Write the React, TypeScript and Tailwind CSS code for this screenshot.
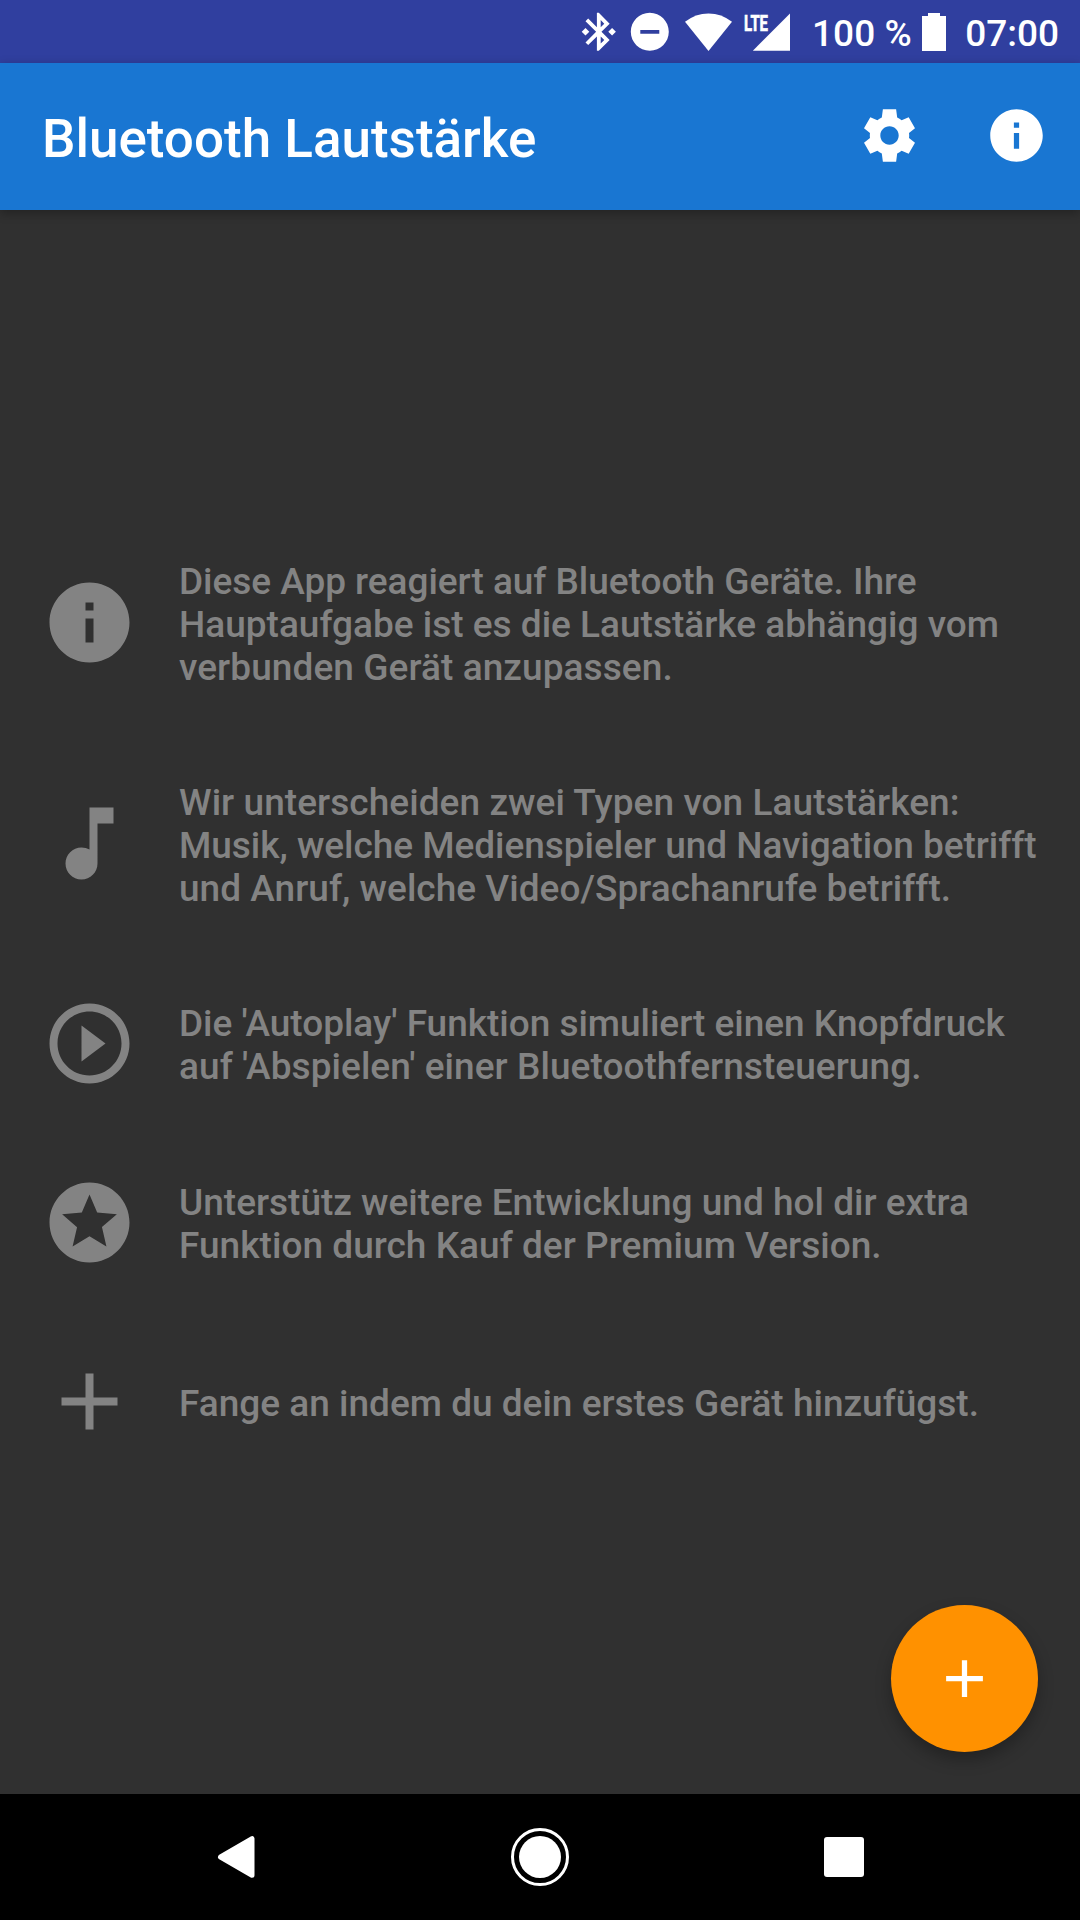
import React from 'react';

type IconProps = { d: string; className?: string };

function Icon({ d, className = '' }: IconProps) {
  return (
    <svg viewBox="0 0 24 24" className={`shrink-0 ${className}`} fill="currentColor" aria-hidden="true">
      <path d={d} />
    </svg>
  );
}

const INFO = 'M12 2C6.48 2 2 6.48 2 12s4.48 10 10 10 10-4.48 10-10S17.52 2 12 2zm1 15h-2v-6h2v6zm0-8h-2V7h2v2z';
const NOTE = 'M12 3v10.55c-.59-.34-1.27-.55-2-.55-2.21 0-4 1.79-4 4s1.79 4 4 4 4-1.79 4-4V7h4V3h-6z';
const PLAY = 'M10 16.5l6-4.5-6-4.5v9zM12 2C6.48 2 2 6.48 2 12s4.48 10 10 10 10-4.48 10-10S17.52 2 12 2zm0 18c-4.41 0-8-3.59-8-8s3.59-8 8-8 8 3.59 8 8-3.59 8-8 8z';
const STARS = 'M11.99 2C6.47 2 2 6.48 2 12s4.47 10 9.99 10C17.52 22 22 17.52 22 12S17.52 2 11.99 2zm4.24 16L12 15.45 7.77 18l1.12-4.81-3.73-3.23 4.92-.42L12 5l1.92 4.53 4.92.42-3.73 3.23L16.23 18z';
const ADD = 'M19 13h-6v6h-2v-6H5v-2h6V5h2v6h6v2z';
const GEAR = 'M19.43 12.98c.04-.32.07-.64.07-.98s-.03-.66-.07-.98l2.28-1.78-2.4-4.16-2.69 1.08c-.52-.4-1.08-.73-1.69-.98L14.52 2H9.48l-.41 3.18c-.61.25-1.17.59-1.69.98L4.69 5.08l-2.4 4.16 2.28 1.78c-.04.32-.07.65-.07.98s.03.66.07.98l-2.28 1.78 2.4 4.16 2.69-1.08c.52.4 1.08.73 1.69.98L9.48 22h5.04l.41-3.18c.61-.25 1.17-.59 1.69-.98l2.69 1.08 2.4-4.16-2.28-1.78zM12 15.5c-1.93 0-3.5-1.57-3.5-3.5s1.57-3.5 3.5-3.5 3.5 1.57 3.5 3.5-1.57 3.5-3.5 3.5z';
const BT = 'M7 12l-2-2-2 2 2 2 2-2zm10.71-4.29L12 2h-1v7.59L6.41 5 5 6.41 10.59 12 5 17.59 6.41 19 11 14.41V22h1l5.71-5.71-4.3-4.29 4.3-4.29zM13 5.83l1.88 1.88L13 9.59V5.83zm1.88 10.46L13 18.17v-3.76l1.88 1.88zM19 10l-2 2 2 2 2-2-2-2z';
const DND = 'M12 2C6.48 2 2 6.48 2 12s4.48 10 10 10 10-4.48 10-10S17.52 2 12 2zm5 11H7v-2h10v2z';

type Line = { text: string; tracking?: string };
type Row = { icon: string; lines: Line[] };

const rows: Row[] = [
  {
    icon: INFO,
    lines: [
      { text: 'Diese App reagiert auf Bluetooth Geräte. Ihre', tracking: 'tracking-[-0.04px]' },
      { text: 'Hauptaufgabe ist es die Lautstärke abhängig vom' },
      { text: 'verbunden Gerät anzupassen.', tracking: 'tracking-[0.08px]' },
    ],
  },
  {
    icon: NOTE,
    lines: [
      { text: 'Wir unterscheiden zwei Typen von Lautstärken:', tracking: 'tracking-[0.06px]' },
      { text: 'Musik, welche Medienspieler und Navigation betrifft', tracking: 'tracking-[-0.04px]' },
      { text: 'und Anruf, welche Video/Sprachanrufe betrifft.', tracking: 'tracking-[0.03px]' },
    ],
  },
  {
    icon: PLAY,
    lines: [
      { text: "Die 'Autoplay' Funktion simuliert einen Knopfdruck", tracking: 'tracking-[-0.03px]' },
      { text: "auf 'Abspielen' einer Bluetoothfernsteuerung.", tracking: 'tracking-[0.06px]' },
    ],
  },
  {
    icon: STARS,
    lines: [
      { text: 'Unterstütz weitere Entwicklung und hol dir extra' },
      { text: 'Funktion durch Kauf der Premium Version.', tracking: 'tracking-[0.03px]' },
    ],
  },
  { icon: ADD, lines: [{ text: 'Fange an indem du dein erstes Gerät hinzufügst.' }] },
];

export default function App() {
  return (
    <div className="relative flex h-[1920px] w-[1080px] flex-col overflow-hidden bg-[#303030] font-[Roboto,sans-serif]">
      <header className="flex h-[63px] shrink-0 items-center justify-end bg-[#303f9f] pr-[21px] text-white">
        <Icon d={BT} className="mr-[5px] size-[45.6px]" />
        <Icon d={DND} className="mr-[13px] size-[45.6px]" />
        <svg viewBox="0 0 47 38" className="mr-[9.5px] h-[38px] w-[47px] shrink-0" fill="currentColor" aria-hidden="true">
          <path d="M23.5 38 0 8.8Q10.5 .4 23.5 .4T47 8.8Z" />
        </svg>
        <svg viewBox="0 0 48 38" className="mr-[22.5px] h-[38px] w-[48px] shrink-0 overflow-visible" fill="currentColor" aria-hidden="true">
          <path d="M48 .5V37.7H10.8Z" />
          <text x="2" y="17.6" fontSize="22.5" fontWeight="700" textLength="24" lengthAdjust="spacingAndGlyphs" stroke="currentColor" strokeWidth=".7">LTE</text>
        </svg>
        <span className="mr-[10.5px] pt-[4px] text-[37px] leading-[44px] font-medium">100 %</span>
        <svg viewBox="0 0 24 38" className="mr-[19px] h-[38px] w-[24px] shrink-0" fill="currentColor" aria-hidden="true">
          <path d="M6 0h12v3h6v35H0V3h6Z" />
        </svg>
        <span className="pt-[4px] text-[37px] leading-[44px] font-medium">07:00</span>
      </header>
      <div className="z-10 flex h-[147px] shrink-0 items-center bg-[#1976d2] pr-[32px] pb-[2px] pl-[42px] text-white shadow-[0_3px_10px_rgba(0,0,0,0.3)]">
        <h1 className="flex-1 pt-[6px] text-[53px] leading-[62px] font-medium">Bluetooth Lautstärke</h1>
        <Icon d={GEAR} className="mr-[64px] size-[63px]" />
        <Icon d={INFO} className="size-[63px]" />
      </div>
      <main className="flex flex-1 flex-col gap-[83px] pt-[343px] pl-[42px] text-[#838383]">
        {rows.map((row) => (
          <div key={row.icon} className="flex items-center">
            <Icon d={row.icon} className="mr-[41px] size-[96px] translate-x-[-0.5px] translate-y-[0.4px]" />
            <p
              className={`pt-[7px] pb-[2px] text-[37px] leading-[43px] font-medium whitespace-nowrap ${
                row.lines.length === 2 ? '-translate-y-px' : ''
              }`}
            >
              {row.lines.map((line) => (
                <span key={line.text} className={`block ${line.tracking ?? ''}`}>{line.text}</span>
              ))}
            </p>
          </div>
        ))}
      </main>
      <button
        aria-label="Gerät hinzufügen"
        className="absolute top-[1605px] left-[891px] flex size-[147px] items-center justify-center rounded-full bg-[#ff9100] text-white shadow-[0_8px_16px_rgba(0,0,0,0.28)]"
      >
        <Icon d={ADD} className="size-[63px]" />
      </button>
      <nav className="flex h-[126px] shrink-0 items-center justify-between bg-black pr-[216px] pl-[217px] text-white">
        <svg viewBox="0 0 38 44" className="h-[44px] w-[38px]" fill="currentColor" stroke="currentColor" strokeWidth="5" strokeLinejoin="round" aria-hidden="true">
          <path d="M3.5 22 35 3.7V40.3Z" />
        </svg>
        <span className="flex size-[58px] items-center justify-center rounded-full border-3 border-white">
          <span className="size-[42px] rounded-full bg-white" />
        </span>
        <span className="size-[40px] rounded-[3px] bg-white" />
      </nav>
    </div>
  );
}
